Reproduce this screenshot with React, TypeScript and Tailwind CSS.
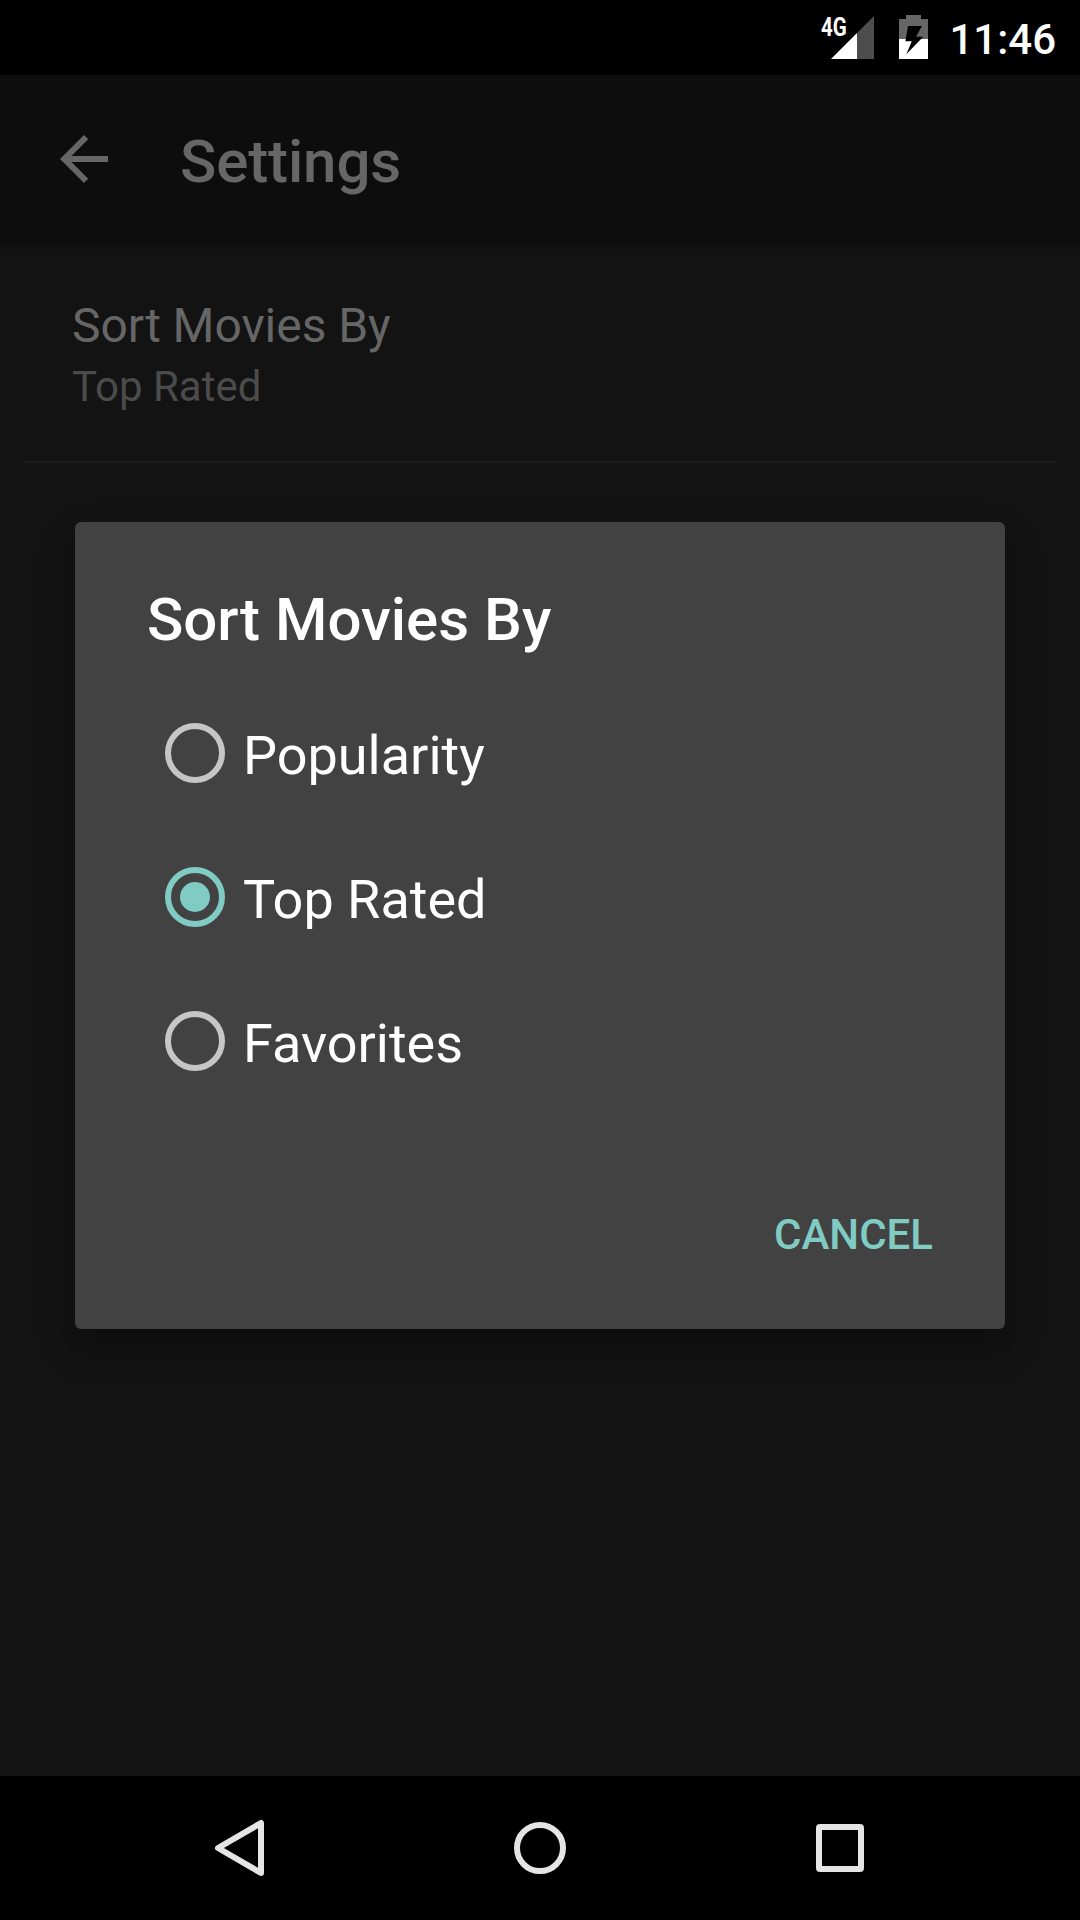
const OPTIONS = ["Popularity", "Top Rated", "Favorites"];

function StatusBar() {
  return (
    <div className="flex h-[75px] items-start justify-end bg-black pr-6 text-white">
      <div className="flex h-[75px] items-start">
        <span className="mt-[13px] mr-[-18px] block h-7 w-[27px] origin-left scale-x-[0.79] text-[26px] leading-7 font-bold whitespace-nowrap">4G</span>
        <svg className="mt-4" width="44" height="43" viewBox="0 0 44 43">
          <path d="M44 0V43H27V17z" fill="#4d4d4d" />
          <path d="M1 43L27 17V43z" fill="#fff" />
        </svg>
        <svg className="mt-[15px] ml-[25px]" width="29" height="44" viewBox="0 0 29 44">
          <path d="M7 0H22V4H29V24H0V4H7z" fill="#666" />
          <path d="M0 24H29V44H0z" fill="#fff" />
          <path d="M9 11H23L17 21.7H24.2L7.3 39.3L12.8 26.3H6.4z" fill="#000" />
        </svg>
      </div>
      <span className="mt-[15px] ml-[22px] flex w-[106px] justify-end text-[42px] leading-[50px] font-medium">11:46</span>
    </div>
  );
}

function AppBar() {
  return (
    <header className="relative flex h-[168px] items-center bg-[#0d0d0d] pl-[60px] text-[#666] shadow-[0_3px_9px_rgba(0,0,0,0.3)]">
      <svg width="48" height="48" viewBox="0 0 48 48">
        <path d="M48 21H11.5L28.2 4.2L24 0L0 24L24 48L28.2 43.8L11.5 27H48z" fill="#666" />
      </svg>
      <h1 className="ml-[72px] pt-[5px] text-6xl leading-[70px] font-medium tracking-[-0.12px]">Settings</h1>
    </header>
  );
}

function Radio({ checked }: { checked: boolean }) {
  return (
    <span className={`flex size-[60px] items-center justify-center rounded-full border-6 ${checked ? "border-[#80cbc4]" : "border-[#c6c6c6]"}`}>
      {checked && <span className="size-[30px] rounded-full bg-[#80cbc4]" />}
    </span>
  );
}

function SortDialog() {
  return (
    <div role="dialog" className="absolute top-[522px] left-[75px] flex h-[807px] w-[930px] flex-col rounded-md bg-[#424242] text-white shadow-[0_18px_36px_rgba(0,0,0,0.3)]">
      <h2 className="mt-[63px] ml-[72px] text-6xl leading-[70px] font-medium">Sort Movies By</h2>
      <div className="mt-[26px]">
        {OPTIONS.map((o) => (
          <label key={o} className="flex h-36 items-center pl-[90px]">
            <Radio checked={o === "Top Rated"} />
            <span className="ml-[18px] pt-[5px] text-[54px] leading-[64px]">{o}</span>
          </label>
        ))}
      </div>
      <button className="mt-[97px] mr-[72px] self-end text-[42px] leading-[50px] font-medium text-[#80cbc4]">CANCEL</button>
    </div>
  );
}

function NavBar() {
  return (
    <nav className="flex h-36 items-center justify-center bg-black">
      <div className="flex w-[900px] items-center justify-around">
        <svg width="60" height="60" viewBox="0 0 60 60" fill="none" stroke="#e5e5e5" strokeWidth="6" strokeLinejoin="round">
          <path d="M51 5V55L8 30z" />
        </svg>
        <svg width="60" height="60" viewBox="0 0 60 60" fill="none" stroke="#e5e5e5" strokeWidth="6">
          <circle cx="30" cy="30" r="23" />
        </svg>
        <svg width="60" height="60" viewBox="0 0 60 60">
          <path d="M10 6H50Q54 6 54 10V50Q54 54 50 54H10Q6 54 6 50V10Q6 6 10 6zM12 12V48H48V12z" fill="#e5e5e5" fillRule="evenodd" />
        </svg>
      </div>
    </nav>
  );
}

export default function App() {
  return (
    <div className="relative flex h-[1920px] w-[1080px] flex-col overflow-hidden bg-[#131313] font-['Roboto',sans-serif]">
      <StatusBar />
      <AppBar />
      <main className="flex-1 px-6">
        <div className="flex h-[220px] flex-col border-b-2 border-[#1c1c1c] pt-[54px] pl-12">
          <div className="text-5xl leading-[57px] tracking-[-0.06px] text-[#666]">Sort Movies By</div>
          <div className="mt-[8px] text-[42px] leading-[50px] text-[#4b4b4b]">Top Rated</div>
        </div>
      </main>
      <NavBar />
      <SortDialog />
    </div>
  );
}
